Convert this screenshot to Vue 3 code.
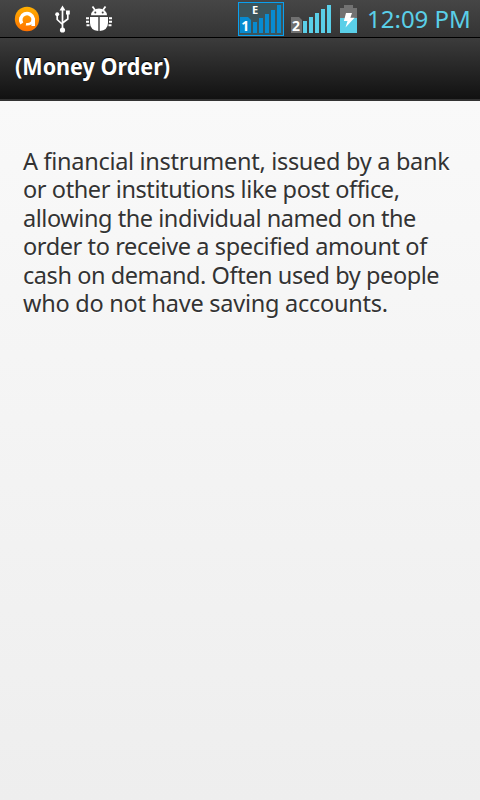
<script setup>
// spacing keeps every line at its own width
const lines = [
    { text: 'A financial instrument, issued by a bank', spacing: -0.3 },
    { text: 'or other institutions like post office,', spacing: -0.4 },
    { text: 'allowing the individual named on the', spacing: -0.45 },
    { text: 'order to receive a specified amount of', spacing: -0.4 },
    { text: 'cash on demand. Often used by people', spacing: -0.43 },
    { text: 'who do not have saving accounts.', spacing: -0.26 },
]
</script>

<template>
    <div class="screen">
        <div class="status-bar">
            <svg class="status-icons" width="120" height="37" viewBox="0 0 120 37">
                <defs>
                    <linearGradient id="orange" x1="0" y1="0" x2="0" y2="1">
                        <stop offset="0" stop-color="#ffb000" />
                        <stop offset="1" stop-color="#ff7200" />
                    </linearGradient>
                </defs>
                <circle cx="27" cy="19" r="12.2" fill="url(#orange)" />
                <g fill="none" stroke="#fff" stroke-width="3.6">
                    <path d="M21.8 23.4A6.3 6.3 0 1 1 33.2 18.8V26" />
                    <path d="M33 19.5C32.4 23 29.6 24.8 26 24.2" stroke-width="2.6" />
                </g>

                <path d="M62.5 9V30M57.2 15V19.5L62.5 24.5M67.8 14V19L62.5 23" fill="none" stroke="#fff" stroke-width="1.7" />
                <g fill="#fff">
                    <path d="M62.5 5.5L65.5 10.5H59.5Z" />
                    <circle cx="57.2" cy="14.3" r="2" />
                    <rect x="66" y="10.5" width="3.8" height="4" />
                    <circle cx="62.5" cy="30" r="2.6" />
                </g>

                <g fill="#fff">
                    <path d="M91 15.3A8 6.8 0 0 1 107 15.3Z" />
                    <path d="M90 17H98.3V31Q90 30 90 23ZM99.7 17H108V23Q108 30 99.7 31Z" />
                    <path d="M86 17.3h3v2h-3zM86 20.8h3v2h-3zM86.5 24.3h3v2h-3zM109 17.3h3v2h-3zM109 20.8h3v2h-3zM108.5 24.3h3v2h-3z" />
                </g>
                <path d="M92.5 6.5L95 10M105.5 6.5L103 10" stroke="#fff" stroke-width="1.8" />
                <circle cx="95.3" cy="12.6" r="1" fill="#444" />
                <circle cx="102.7" cy="12.6" r="1" fill="#444" />
            </svg>

            <svg class="status-icons" width="122" height="37" viewBox="238 0 122 37">
                <rect x="238.5" y="2.5" width="45" height="33" fill="#3b555c" stroke="#0aa0f0" />
                <path d="M240 17h8l3 3v13h-11z" fill="#078bd0" />
                <path d="M253 22h4v11h-4zM259 18h4v15h-4zM265 14h4v19h-4zM271 10h4v23h-4zM277 5h4v28h-4z" fill="#078bd0" />
                <text x="252" y="13.5" class="badge small">E</text>
                <text x="241.3" y="31" class="badge">1</text>

                <path d="M291 17h8l3 3v13h-11z" fill="#707070" />
                <path d="M303 21h4v12h-4zM309 17h4v16h-4zM315 13h4v20h-4zM321 9h4v24h-4zM327 5h4v28h-4z" fill="#5acfe8" />
                <text x="292" y="31" class="badge">2</text>

                <path d="M344 5h9v3h4v10h-17V8h4z" fill="#727272" />
                <path d="M340 18h17v15h-17z" fill="#5acfe8" />
                <path d="M346 13h6l-1.6 4.8h4.2L345.5 27.5l2-6.4h-3.6z" fill="#fff" />
            </svg>
            <span class="clock">12:09 PM</span>
        </div>

        <header class="title-bar">
            <h1>(Money Order)</h1>
        </header>

        <main class="content">
            <p>
                <span v-for="line in lines" :key="line.text" class="line" :style="{ letterSpacing: line.spacing + 'px' }">{{ line.text }}</span>
            </p>
        </main>
    </div>
</template>

<style>
body {
    margin: 0;
    background: #eee;
}
</style>

<style scoped>
.screen {
    display: flex;
    flex-direction: column;
    width: 480px;
    height: 800px;
    overflow: hidden;
    font-family: "Noto Sans", sans-serif;
}

.status-bar {
    display: flex;
    box-sizing: border-box;
    height: 38px;
    background: linear-gradient(#464646, #343434);
    border-bottom: 1px solid #000;
}

.status-icons {
    flex: none;
}

.status-icons + .status-icons {
    margin-left: 118px;
}

.badge {
    fill: #fff;
    font: bold 14px "Noto Sans", sans-serif;
}

.small {
    font-size: 11px;
}

.clock {
    margin-left: 7px;
    color: #5acfe8;
    font-size: 24px;
    line-height: 38px;
    white-space: nowrap;
}

.title-bar {
    box-sizing: border-box;
    height: 63px;
    padding-left: 15px;
    background: linear-gradient(#3c3c3c, #111);
    border-bottom: 2px solid #333;
}

h1 {
    width: max-content;
    margin: 0;
    color: #fff;
    font-size: 23.5px;
    font-weight: bold;
    line-height: 57px;
    text-shadow: 0 -1px 1px #000;
    white-space: nowrap;
    transform: scaleX(0.917);
    transform-origin: left;
}

.content {
    flex: 1;
    padding: 46px 0 0 23px;
    background: linear-gradient(#f9f9f9, #eee);
}

p {
    margin: 0;
    color: #333;
    font-size: 23.5px;
    line-height: 28.4px;
    text-shadow: 0 1px 0 #fff;
}

.line {
    display: block;
    width: max-content;
    white-space: nowrap;
}
</style>
